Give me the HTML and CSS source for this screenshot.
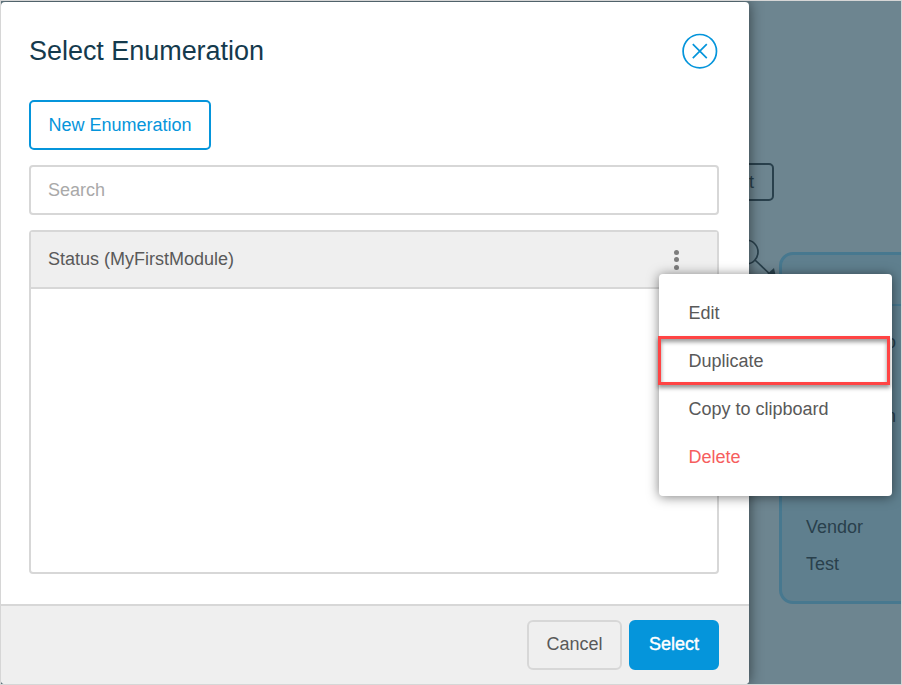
FILE: index.html
```html
<!DOCTYPE html>
<html lang="en">
<head>
<meta charset="utf-8">
<title>Select Enumeration</title>
<link rel="stylesheet" href="styles.css">
</head>
<body>
<div class="frame">
  <div class="canvas">
    <div class="node-box">t</div>
    <svg class="connector" width="60" height="60" viewBox="0 0 60 60" fill="none" stroke="#29404c" stroke-width="1.7">
      <circle cx="15" cy="22" r="12"/>
      <path d="M24 30L43 48"/>
      <path d="M43 38L46 52L34 46Z" fill="#29404c" stroke="none"/>
    </svg>
    <div class="entity">
      <div class="entity-head"></div>
      <div class="entity-row clipped">o</div>
      <div class="entity-row"></div>
      <div class="entity-row clipped">n</div>
      <div class="entity-row"></div>
      <div class="entity-row"></div>
      <div class="entity-row">Vendor</div>
      <div class="entity-row">Test</div>
    </div>
  </div>
  <section class="dialog">
    <header class="dialog-head">
      <h1>Select Enumeration</h1>
      <svg class="close" width="36" height="36" viewBox="0 0 36 36" fill="none" stroke="#0595db" stroke-width="1.700">
        <circle cx="17.800" cy="18.200" r="16.700"/>
        <path d="M10.800 11.200L24.800 25.200M24.800 11.200L10.800 25.200"/>
      </svg>
    </header>
    <div class="dialog-body">
      <button class="btn outline">New Enumeration</button>
      <input class="search" type="text" placeholder="Search">
      <div class="list">
        <div class="list-row">
          <span>Status (MyFirstModule)</span>
          <span class="dots"><i></i><i></i><i></i></span>
        </div>
      </div>
    </div>
    <footer class="dialog-foot">
      <button class="btn cancel">Cancel</button>
      <button class="btn primary">Select</button>
    </footer>
  </section>
  <div class="menu">
    <div class="menu-item">Edit</div>
    <div class="menu-item">Duplicate<span class="highlight"></span></div>
    <div class="menu-item">Copy to clipboard</div>
    <div class="menu-item danger">Delete</div>
  </div>
</div>
</body>
</html>
```

FILE: styles.css
```css
* { box-sizing: border-box; }
body {
  margin: 0;
  font: 18px/22px "Liberation Sans", Arial, sans-serif;
  color: #595959;
}
.frame {
  position: relative;
  width: 902px;
  height: 685px;
  padding-top: 1px;
  border: 1px solid #d6d6d6;
  background: #6d8590;
  overflow: hidden;
}
.canvas {
  position: absolute;
  inset: 0;
  color: #29404c;
}
.node-box {
  position: absolute;
  left: 700px;
  top: 162px;
  width: 72.5px;
  height: 38px;
  border: 2px solid #29404c;
  border-radius: 5px;
  padding: 6px 17.5px;
  text-align: right;
}
.connector {
  position: absolute;
  left: 730px;
  top: 229px;
}
.entity {
  position: absolute;
  left: 778px;
  top: 251px;
  width: 160px;
  height: 352px;
  border: 3px solid #47788f;
  border-radius: 14px;
  background: #5f7f8e;
}
.entity-head {
  height: 51px;
  margin-bottom: 18px;
  border-bottom: 2px solid #47788f;
}
.entity-row {
  height: 37px;
  padding-left: 24px;
  line-height: 37px;
}
.entity-row.clipped {
  width: 114px;
  padding: 0;
  text-align: right;
}
.dialog {
  position: relative;
  display: flex;
  flex-direction: column;
  width: 748px;
  height: 682px;
  background: #fff;
  border-radius: 4px;
  box-shadow: 0 0 14px rgba(0, 0, 0, .55);
  overflow: hidden;
}
.dialog-head {
  display: flex;
  justify-content: space-between;
  align-items: center;
  height: 98px;
  padding: 0 31px 0 28px;
}
h1 {
  margin: 0;
  font-size: 27px;
  line-height: 32px;
  font-weight: 400;
  letter-spacing: -.04px;
  color: #143a4d;
}
.close { display: block; }
.dialog-body {
  flex: 1;
  display: flex;
  flex-direction: column;
  align-items: flex-start;
  gap: 15px;
  padding: 0 30px 30px 28px;
}
.btn {
  height: 50px;
  padding: 0 17px 2px;
  border: 2px solid #d7d7d7;
  border-radius: 6px;
  background: transparent;
  color: #595959;
  font: inherit;
}
.btn.outline {
  width: 182px;
  padding-bottom: 0;
  border-color: #0595db;
  border-radius: 5px;
  color: #0595db;
}
.btn.cancel { width: 95px; }
.btn.primary {
  padding: 0 18px 2px;
  border-color: #0595db;
  background: #0595db;
  color: #fff;
  -webkit-text-stroke: .4px #fff;
}
.search {
  width: 100%;
  height: 50px;
  padding: 0 17px;
  border: 2px solid #d7d7d7;
  border-radius: 4px;
  font: inherit;
}
.search::placeholder { color: #a9a9a9; }
.list {
  width: 100%;
  flex: 1;
  border: 2px solid #d7d7d7;
  border-radius: 4px;
}
.list-row {
  display: flex;
  align-items: center;
  justify-content: space-between;
  height: 57px;
  padding: 0 38px 2px 17px;
  border-bottom: 2px solid #d7d7d7;
  background: #efefef;
}
.dots {
  display: flex;
  flex-direction: column;
  gap: 2.5px;
  padding-top: 2px;
}
.dots i {
  width: 5px;
  height: 5px;
  border-radius: 50%;
  background: #7d7d7d;
}
.dialog-foot {
  display: flex;
  justify-content: flex-end;
  gap: 7px;
  height: 80px;
  padding: 14px 30px 0;
  border-top: 2px solid #d7d7d7;
  background: #efefef;
}
.menu {
  position: absolute;
  left: 658px;
  top: 273px;
  width: 233px;
  padding: 15px 0;
  border-radius: 4px;
  background: #fff;
  box-shadow: 0 1px 12px rgba(0, 0, 0, .5);
}
.menu-item {
  position: relative;
  height: 48px;
  padding-left: 29.5px;
  line-height: 48px;
}
.menu-item.danger { color: #f65e5e; }
.highlight {
  position: absolute;
  left: -1px;
  top: -1px;
  width: 232px;
  height: 49px;
  border: 3px solid #ff4444;
  box-shadow: 0 3px 4px rgba(0, 0, 0, .4), inset 0 3px 4px rgba(0, 0, 0, .4);
}
```
